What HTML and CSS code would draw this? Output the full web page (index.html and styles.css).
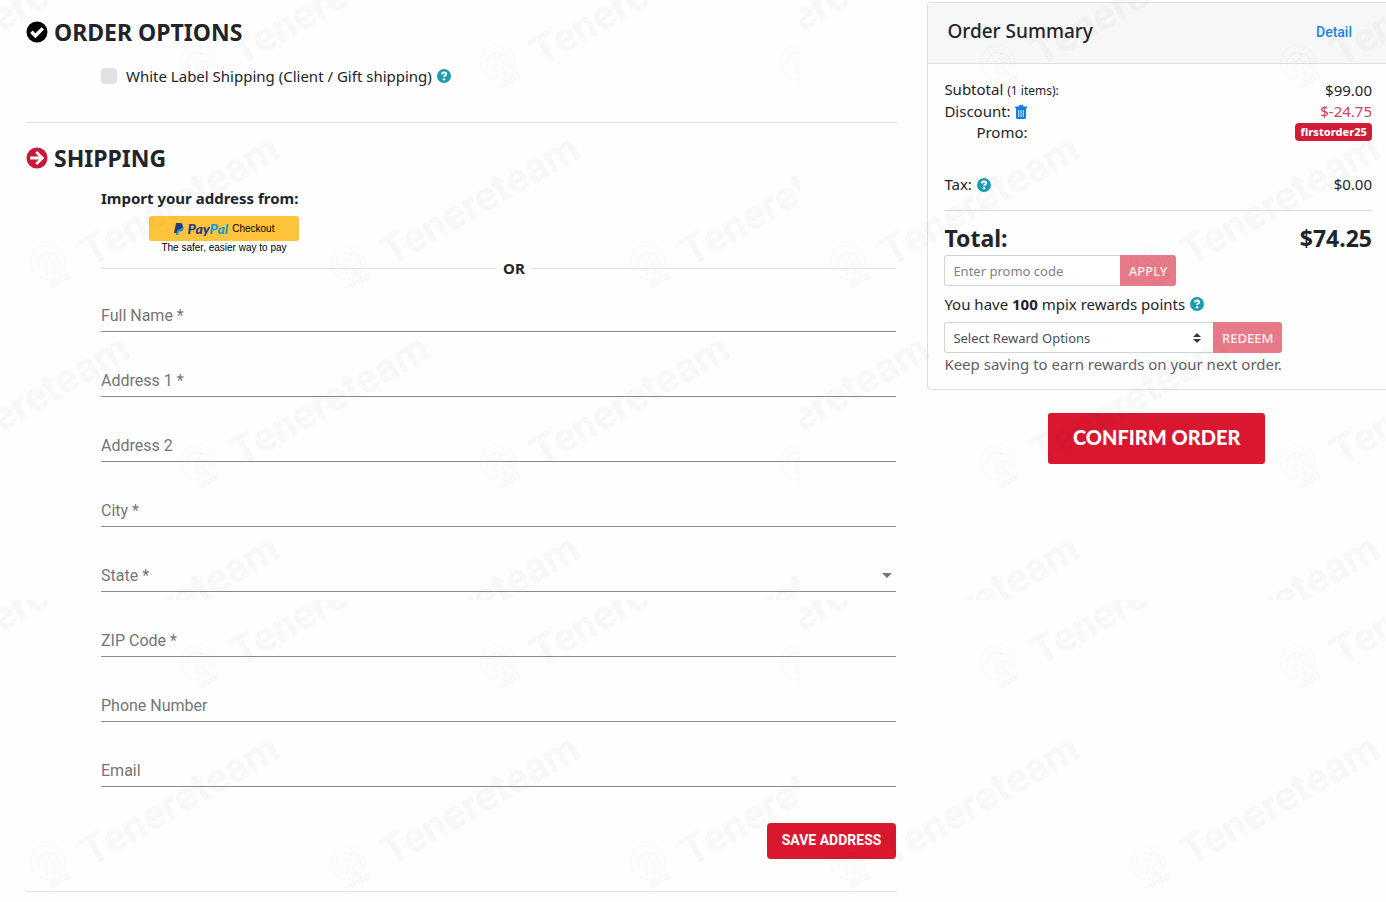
FILE: index.html
```html
<!DOCTYPE html>
<html lang="en">
<head>
<meta charset="utf-8">
<meta name="viewport" content="width=device-width, initial-scale=1">
<title>Checkout</title>
<link rel="stylesheet" href="styles.css">
</head>
<body>
<svg class="defs" aria-hidden="true">
  <symbol id="help" viewBox="0 0 14 14">
    <circle cx="7" cy="7" r="7" fill="#1b9cb0"/>
    <path d="M4.900 5.300C5 4 5.900 3.500 7.100 3.500c1.300 0 2.100.600 2.100 1.600 0 1.500-2.100 1.400-2.100 3" fill="none" stroke="#fff" stroke-width="2"/>
    <circle cx="7.100" cy="10.300" r="1.200" fill="#fff"/>
  </symbol>
</svg>

<main class="page">
  <div class="checkout">
    <section class="section">
      <h2 class="heading">
        <svg class="heading-icon" viewBox="0 0 22 22" aria-hidden="true"><circle cx="11" cy="11" r="10.500" fill="#000"/><path d="M5.400 10.800l4 4 7.400-7.400" fill="none" stroke="#fff" stroke-width="3.400"/></svg>
        ORDER OPTIONS
      </h2>
      <div class="option">
        <input class="option-box" type="checkbox" id="white-label" disabled>
        <label for="white-label">White Label Shipping (Client / Gift shipping)</label>
        <svg class="help" role="img" aria-label="Help"><use href="#help"/></svg>
      </div>
    </section>

    <section class="section">
      <h2 class="heading">
        <svg class="heading-icon" viewBox="0 0 22 22" aria-hidden="true"><circle cx="11" cy="11" r="10.500" fill="#c8183a"/><path d="M4.200 11h12M10.200 4.900l6.100 6.100-6.100 6.100" fill="none" stroke="#fff" stroke-width="2.800"/></svg>
        SHIPPING
      </h2>
      <form class="address">
        <p class="import-title">Import your address from:</p>
        <div class="paypal">
          <button class="paypal-button" type="button">
            <svg class="paypal-mark" viewBox="0 0 11 13" aria-hidden="true"><path d="M4 3h4.500C10.500 3 11 4.600 10.500 6.400 10 8.300 8.600 9.200 6.600 9.200H5.400L4.700 13H2z" fill="#179bd7"/><path d="M2.200 0h4.600C9 0 9.900 1.500 9.400 3.700 8.900 6 7.400 7 5.200 7H3.700L2.900 11H0z" fill="#253b80"/></svg>
            <span class="paypal-name">Pay<span class="paypal-pal">Pal</span></span>
            <span>Checkout</span>
          </button>
          <span class="paypal-note">The safer, easier way to pay</span>
        </div>
        <div class="divider">OR</div>
        <div class="fields">
          <div class="field"><input id="name" type="text" required><label for="name">Full Name *</label></div>
          <div class="field"><input id="address1" type="text" required><label for="address1">Address 1 *</label></div>
          <div class="field"><input id="address2" type="text"><label for="address2">Address 2</label></div>
          <div class="field"><input id="city" type="text" required><label for="city">City *</label></div>
          <div class="field">
            <select id="state" required><option value=""></option></select>
            <label for="state">State *</label>
            <svg class="field-arrow" viewBox="0 0 10 5" aria-hidden="true"><path d="M0 0h10L5 5z" fill="#757575"/></svg>
          </div>
          <div class="field"><input id="zip" type="text" required><label for="zip">ZIP Code *</label></div>
          <div class="field"><input id="phone" type="tel"><label for="phone">Phone Number</label></div>
          <div class="field"><input id="email" type="email"><label for="email">Email</label></div>
        </div>
        <button class="save" type="button">SAVE ADDRESS</button>
      </form>
    </section>
  </div>

  <aside class="sidebar">
    <section class="card">
      <header class="card-header">
        <h2 class="card-title">Order Summary</h2>
        <a class="detail" href="#detail">Detail</a>
      </header>
      <div class="card-body">
        <div class="row"><span>Subtotal <span class="items">(1 items):</span></span><span>$99.00</span></div>
        <div class="row">
          <span class="with-icon">Discount:
            <svg class="trash" viewBox="0 0 12 14" aria-hidden="true"><path d="M0 1.500h3.500L4.500 0h3l1 1.500H12V3H0zM1 3h10v9.500q0 1.500-1.500 1.500h-7Q1 14 1 12.500z" fill="#0f7fe0"/><path d="M3.700 5v7M6 5v7M8.300 5v7" stroke="#d8ecff"/></svg>
          </span>
          <span class="negative">$-24.75</span>
        </div>
        <div class="row row-sub"><span>Promo:</span><span class="badge">firstorder25</span></div>
        <div class="row row-tax">
          <span class="with-icon">Tax: <svg class="help" role="img" aria-label="Help"><use href="#help"/></svg></span>
          <span>$0.00</span>
        </div>
        <div class="row row-total"><span>Total:</span><span>$74.25</span></div>
        <div class="group group-promo">
          <input class="control" type="text" placeholder="Enter promo code" aria-label="Promo code">
          <button class="group-button" type="button" disabled>APPLY</button>
        </div>
        <p class="points with-icon"><span>You have <b>100</b> mpix rewards points</span> <svg class="help" role="img" aria-label="Help"><use href="#help"/></svg></p>
        <div class="group group-reward">
          <select class="control control-select" aria-label="Reward options"><option>Select Reward Options</option></select>
          <svg class="sort" viewBox="0 0 8 10" aria-hidden="true"><path d="M0 4l4-4 4 4zM0 6h8l-4 4z" fill="#343a40"/></svg>
          <button class="group-button" type="button" disabled>REDEEM</button>
        </div>
        <p class="saving">Keep saving to earn rewards on your next order.</p>
      </div>
    </section>
    <button class="confirm" type="button">CONFIRM ORDER</button>
  </aside>
</main>

<svg class="watermark" aria-hidden="true">
  <defs>
    <g id="mark">
      <g fill="none" stroke="#000" stroke-opacity=".03">
        <circle cx="-2" cy="-1" r="17" stroke-dasharray="2 1"/>
        <path d="M-12 4q-3-8 3-11 4-6 9-2 6-2 9 4 4 6-1 11M-8-4l4 3 3-4 4 5 5-3M-7 3l5-2 4 3 5-3M-9 8q5-5 8 0t7 0l3 4M0-11l2 4M-3 6v8M3 4l2 9"/>
        <path d="M-1 23l20-13M1 25l19-12" stroke-width="2" stroke-dasharray="3 1"/>
      </g>
      <text class="watermark-text" transform="translate(41 4) rotate(-30)">Tenereteam</text>
    </g>
    <pattern id="tile" width="800" height="600" patternUnits="userSpaceOnUse">
      <use href="#mark" x="-100" y="63"/><use href="#mark" x="200" y="63"/><use href="#mark" x="500" y="63"/><use href="#mark" x="800" y="63"/>
      <use href="#mark" x="50" y="263"/><use href="#mark" x="350" y="263"/><use href="#mark" x="650" y="263"/>
      <use href="#mark" x="-100" y="463"/><use href="#mark" x="200" y="463"/><use href="#mark" x="500" y="463"/><use href="#mark" x="800" y="463"/>
      <use href="#mark" x="50" y="663"/><use href="#mark" x="350" y="663"/><use href="#mark" x="650" y="663"/>
    </pattern>
  </defs>
  <rect width="100%" height="100%" fill="url(#tile)"/>
</svg>
</body>
</html>
```

FILE: styles.css
```css
* {
  box-sizing: border-box;
}

body {
  margin: 0;
  background: #fefefe;
  color: #212529;
  font: 15px/24px "Noto Sans", "Open Sans", sans-serif;
}

h2,
p {
  margin: 0;
}

button,
input,
select {
  margin: 0;
  font: inherit;
  color: inherit;
}

button {
  cursor: pointer;
}

.defs {
  display: none;
}

.page {
  display: grid;
  grid-template-columns: minmax(0, 19fr) minmax(0, 10fr);
  gap: 30px;
  padding-left: 26px;
}

/* Checkout column */

.section {
  padding: 16px 0 32px;
  border-bottom: 1px solid #dfe1e3;
}

.section + .section {
  padding-top: 19px;
}

.heading {
  display: flex;
  align-items: center;
  gap: 6px;
  font-size: 23px;
  line-height: 32px;
  font-weight: 700;
}

.heading-icon {
  width: 22px;
  height: 22px;
}

.option {
  display: flex;
  align-items: center;
  margin: 16px 0 2px;
  padding-left: 75px;
}

.option-box {
  appearance: none;
  width: 16px;
  height: 16px;
  margin-right: 9px;
  border-radius: 4px;
  background: #dfe1e3;
}

.help {
  width: 14px;
  height: 14px;
  margin-left: 5px;
}

.address {
  display: flex;
  flex-direction: column;
  padding: 12px 1px 0 75px;
}

.import-title {
  font-weight: 700;
}

.paypal {
  display: flex;
  flex-direction: column;
  align-self: flex-start;
  align-items: center;
  margin: 6px 0 2px 48px;
  font: 10px/14px "Liberation Sans", Arial, sans-serif;
  color: #000;
}

.paypal-button {
  display: flex;
  align-items: center;
  justify-content: center;
  gap: 4px;
  width: 150px;
  height: 25px;
  padding: 0;
  border: 0;
  border-radius: 3px;
  background: #fec43b;
}

.paypal-mark {
  width: 10px;
  height: 12px;
}

.paypal-name {
  font: italic 900 14px/16px Lato, sans-serif;
  color: #253b80;
}

.paypal-pal {
  color: #179bd7;
}

.divider {
  display: flex;
  align-items: center;
  gap: 6px;
  line-height: 23px;
  font-weight: 700;
}

.divider::before,
.divider::after {
  content: "";
  flex: 1;
  border-top: 1px solid #dfe1e3;
}

.divider::before {
  flex-grow: 13;
}

.divider::after {
  flex-grow: 12;
}

.fields {
  display: grid;
  gap: 13px;
  font: 16px/24px Roboto, sans-serif;
}

.field {
  display: grid;
  height: 52px;
  align-items: end;
  border-bottom: 1px solid #8c8c8c;
}

.field > * {
  grid-area: 1 / 1;
}

.field input,
.field select {
  appearance: none;
  width: 100%;
  height: 32px;
  padding: 0;
  border: 0;
  outline: 0;
  background: transparent;
}

.field label {
  padding-bottom: 3px;
  color: #757575;
  pointer-events: none;
}

.field-arrow {
  justify-self: end;
  width: 10px;
  height: 5px;
  margin: 0 4px 13px 0;
  pointer-events: none;
}

.save {
  align-self: flex-end;
  height: 36px;
  margin-top: 36px;
  padding: 0 15px 2px;
  border: 0;
  border-radius: 4px;
  background: #d9182f;
  color: #fff;
  font: 700 14px/20px Roboto, sans-serif;
}

/* Order summary */

.sidebar {
  display: flex;
  flex-direction: column;
  align-items: center;
  gap: 23px;
  padding-top: 2px;
}

.card {
  width: 100%;
  border: 1px solid #dfdfdf;
  border-right: 0;
  border-radius: 4px 0 0 4px;
}

.card-header {
  display: flex;
  align-items: center;
  justify-content: space-between;
  padding: 12px 34px 16px 19px;
  border-bottom: 1px solid #dfdfdf;
  background: #f7f7f7;
}

.card-title {
  font-size: 19px;
  line-height: 32px;
  font-weight: 500;
}

.detail {
  padding-top: 2px;
  color: #1a86d8;
  font: 500 14px/20px Roboto, sans-serif;
  text-decoration: none;
}

.card-body {
  padding: 15px 14px 14px 16px;
}

.row {
  display: flex;
  align-items: center;
  justify-content: space-between;
  line-height: 21px;
}

.items {
  font-size: 12px;
}

.with-icon {
  display: flex;
  align-items: center;
}

.trash {
  width: 12px;
  height: 14px;
  margin-left: 4px;
}

.negative {
  color: #d0405f;
}

.row-sub {
  padding-left: 32px;
  line-height: 20px;
}

.badge {
  padding: 0 5px;
  border-radius: 4px;
  background: #d01c38;
  color: #fff;
  font-size: 11px;
  line-height: 18px;
  font-weight: 800;
}

.row-tax {
  padding: 32px 0 15px;
  border-bottom: 1px solid #dcdcdc;
}

.row-total {
  margin-top: 11px;
  padding-bottom: 1px;
  font-size: 23px;
  line-height: 32px;
  font-weight: 700;
}

.group {
  display: flex;
  align-items: center;
  max-width: 100%;
  height: 31px;
}

.group-promo {
  width: 232px;
}

.group-reward {
  width: 338px;
}

.control {
  flex: 1;
  min-width: 0;
  height: 31px;
  padding: 0 8px;
  border: 1px solid #ced4da;
  border-right: 0;
  border-radius: 3px 0 0 3px;
  background: #fff;
  color: #495057;
  font-size: 13px;
}

.control::placeholder {
  color: #7b8288;
  opacity: 1;
}

.control-select {
  appearance: none;
}

.sort {
  width: 8px;
  height: 10px;
  margin: 0 12px 0 -20px;
  pointer-events: none;
}

.group-button {
  height: 31px;
  padding: 0 9px;
  border: 0;
  border-radius: 0 3px 3px 0;
  background: #e77a88;
  color: #fdeef0;
  font-size: 13px;
  font-weight: 500;
}

.points {
  margin: 7px 0;
  line-height: 22px;
}

.saving {
  color: #5c6166;
  line-height: 22px;
}

.confirm {
  padding: 12px 25px 14px;
  border: 0;
  border-radius: 3px;
  background: #d9182f;
  color: #fff;
  font: 900 20px/25px Lato, sans-serif;
}

/* Watermark layer */

.watermark {
  position: absolute;
  inset: 0;
  width: 100%;
  height: 100%;
  pointer-events: none;
}

.watermark-text {
  font: 700 41px Roboto, sans-serif;
  fill: #000;
  fill-opacity: .022;
}
```
